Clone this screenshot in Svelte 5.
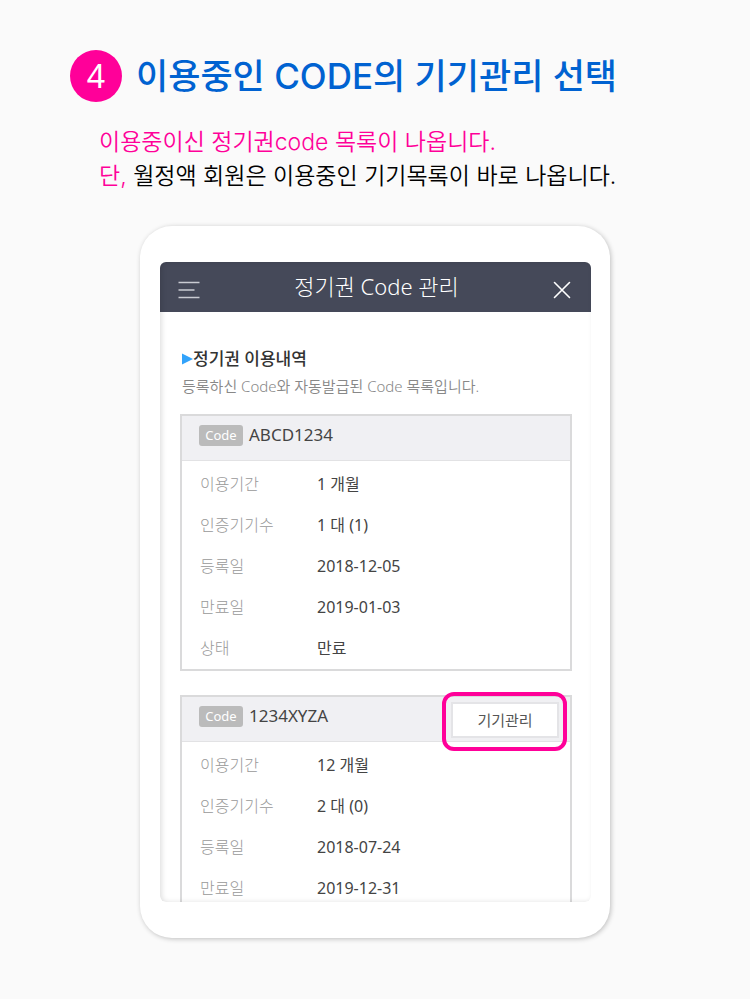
<script>
    const codes = [
        {
            code: 'ABCD1234',
            manageable: false,
            rows: [
                ['이용기간', '1 개월'],
                ['인증기기수', '1 대 (1)'],
                ['등록일', '2018-12-05'],
                ['만료일', '2019-01-03'],
                ['상태', '만료']
            ]
        },
        {
            code: '1234XYZA',
            manageable: true,
            rows: [
                ['이용기간', '12 개월'],
                ['인증기기수', '2 대 (0)'],
                ['등록일', '2018-07-24'],
                ['만료일', '2019-12-31']
            ]
        }
    ];
</script>

<main>
    <header class="step">
        <span class="number">4</span>
        <h1>이용중인 CODE의 기기관리 선택</h1>
    </header>

    <p class="guide">
        <em>이용중이신 정기권code 목록이 나옵니다.</em><br />
        <em>단,</em> 월정액 회원은 이용중인 기기목록이 바로 나옵니다.
    </p>

    <div class="tablet">
        <div class="screen">
            <div class="appbar">
                <button class="icon" aria-label="메뉴">
                    <svg width="22" height="18" viewBox="0 0 22 18">
                        <path d="M0.5 1.5h21M0.5 9h16M0.5 16.5h21" stroke="#c9cbd2" stroke-width="1.6" />
                    </svg>
                </button>
                <h2>정기권 Code 관리</h2>
                <button class="icon" aria-label="닫기">
                    <svg width="18" height="18" viewBox="0 0 18 18">
                        <path d="M1.5 1.5l15 15M16.5 1.5l-15 15" stroke="#fff" stroke-width="1.6" stroke-linecap="round" />
                    </svg>
                </button>
            </div>

            <div class="content">
                <h3>
                    <svg width="11" height="12" viewBox="0 0 11 12" aria-hidden="true">
                        <path d="M0 0.5L11 6L0 11.5z" fill="#32a3fb" />
                    </svg>
                    정기권 이용내역
                </h3>
                <p class="desc">등록하신 Code와 자동발급된 Code 목록입니다.</p>

                {#each codes as item}
                    <section class="card">
                        <div class="card-head">
                            <span class="badge">Code</span>
                            <strong>{item.code}</strong>
                            {#if item.manageable}
                                <div class="highlight">
                                    <button class="manage">기기관리</button>
                                </div>
                            {/if}
                        </div>
                        <dl>
                            {#each item.rows as [label, value]}
                                <div class="row">
                                    <dt>{label}</dt>
                                    <dd>{value}</dd>
                                </div>
                            {/each}
                        </dl>
                    </section>
                {/each}
            </div>
        </div>
    </div>
</main>

<style>
    :global(body) {
        margin: 0;
        background: #fafafa;
    }

    main {
        box-sizing: border-box;
        max-width: 750px;
        margin: 0 auto;
        padding: 50px 70px 61px;
        font-family: 'Noto Sans', 'Noto Sans CJK KR', sans-serif;
        color: #333;
    }

    h1, h2, h3, p, dl, dd {
        margin: 0;
    }

    button {
        padding: 0;
        border: 0;
        background: none;
        font: inherit;
        color: inherit;
        cursor: pointer;
    }

    .step {
        display: flex;
        align-items: center;
        gap: 14px;
    }

    .number {
        flex: none;
        width: 52px;
        border-radius: 50%;
        background: #ff0099;
        color: #fff;
        font-size: 32px;
        line-height: 52px;
        text-align: center;
    }

    h1 {
        font-family: Inter, 'Noto Sans CJK KR', sans-serif;
        font-size: 35px;
        font-weight: 500;
        line-height: 52px;
        color: #0062d1;
    }

    .guide {
        margin: 23px 0 0 29px;
        font-family: Inter, 'Noto Sans CJK KR', sans-serif;
        font-size: 23px;
        font-weight: 350;
        line-height: 34px;
        color: #000;
    }

    .guide em {
        font-style: normal;
        color: #ff0099;
    }

    .tablet {
        box-sizing: border-box;
        max-width: 470px;
        margin: 33px auto 0;
        padding: 36px 19px 36px 20px;
        border-radius: 32px;
        background: #fff;
        box-shadow: 1px 1px 5px rgba(0, 0, 0, 0.24);
    }

    .screen {
        position: relative;
        aspect-ratio: 431 / 640;
        border-radius: 6px;
        overflow: hidden;
    }

    .screen::after {
        content: '';
        position: absolute;
        inset: 0;
        border-radius: 6px;
        box-shadow: inset 2px 0 5px rgba(0, 0, 0, 0.12);
        pointer-events: none;
    }

    .appbar {
        display: flex;
        align-items: flex-start;
        justify-content: space-between;
        height: 50px;
        padding: 0 20px 0 18px;
        background: #454959;
        color: #fff;
    }

    .appbar h2 {
        font-size: 22px;
        font-weight: 300;
        line-height: 48px;
    }

    .icon {
        height: 18px;
        margin-top: 19px;
    }

    .icon svg {
        display: block;
    }

    .content {
        padding: 34px 19px 0 20px;
    }

    h3 {
        display: flex;
        align-items: center;
        padding-left: 2px;
        font-size: 17px;
        font-weight: 500;
        line-height: 26px;
    }

    .desc {
        padding-left: 2px;
        font-size: 15px;
        font-weight: 350;
        line-height: 28px;
        color: #888;
    }

    .card {
        margin-top: 14px;
        border: 2px solid #dadadb;
    }

    .card + .card {
        margin-top: 24px;
    }

    .card-head {
        position: relative;
        display: flex;
        align-items: center;
        gap: 6px;
        height: 38px;
        padding: 0 17px 6px;
        border-bottom: 1px solid #e2e2e4;
        background: #f0f0f3;
    }

    .badge {
        width: 44px;
        border-radius: 3px;
        background: #bbb;
        color: #fff;
        font-size: 13px;
        line-height: 21px;
        text-align: center;
    }

    strong {
        font-size: 17px;
        font-weight: 400;
        line-height: 38px;
        color: #444;
    }

    .highlight {
        position: absolute;
        top: -5px;
        right: 3px;
        padding: 6px 4px 9px 5px;
        border: 4px solid #ff0099;
        border-radius: 12px;
    }

    .manage {
        display: block;
        width: 108px;
        height: 36px;
        border: 2px solid #e4e4e7;
        background: #fff;
        font-size: 15px;
        line-height: 30px;
        color: #555;
    }

    dl {
        padding-top: 3px;
    }

    .row {
        display: flex;
        padding: 0 18px;
        font-size: 16px;
        line-height: 41px;
    }

    dt {
        width: 117px;
        font-weight: 300;
        color: #999;
    }

    dd {
        flex: 1;
        color: #444;
    }
</style>
